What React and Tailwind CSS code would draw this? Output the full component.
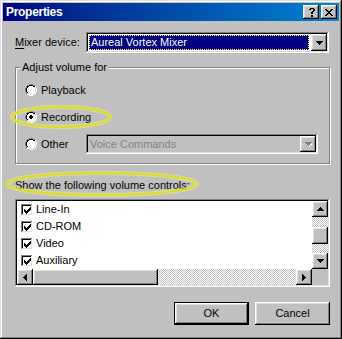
import React from 'react';

// win98 bevels
const raised = 'shadow-[inset_-1px_-1px_#000,inset_1px_1px_#fff,inset_-2px_-2px_#808080,inset_2px_2px_#dfdfdf]';
const sunken = 'shadow-[inset_-1px_-1px_#fff,inset_1px_1px_#808080,inset_-2px_-2px_#dfdfdf,inset_2px_2px_#000]';
const track = 'bg-[image:repeating-conic-gradient(#c0c0c0_0_25%,#ffffff_0_50%)] bg-[length:2px_2px]';

const PAL = { g: '#808080', k: '#000000', w: '#ffffff', l: '#dfdfdf', i: '#ffffff', d: '#000000', '#': '#000000', s: '#808080', h: '#ffffff' };

function Pixels({ rows, colors = PAL, className = '' }) {
  const rects = [];
  rows.forEach((row, y) => {
    [...row].forEach((ch, x) => {
      if (colors[ch]) rects.push(<rect key={x + '-' + y} x={x} y={y} width="1" height="1" fill={colors[ch]} />);
    });
  });
  const w = rows[0].length;
  const h = rows.length;
  return (
    <svg width={w} height={h} viewBox={`0 0 ${w} ${h}`} shapeRendering="crispEdges" className={className}>
      {rects}
    </svg>
  );
}

const RADIO = [
  '....gggg....',
  '..ggkkkkgg..',
  '.gkkiiiikkw.',
  '.gkiiiiiilw.',
  'gkiiiiiiiilw',
  'gkiiiiiiiilw',
  'gkiiiiiiiilw',
  'gkiiiiiiiilw',
  '.gkiiiiiilw.',
  '.glliiiillw.',
  '..wwllllww..',
  '....wwww....',
];

const RADIO_ON = [
  '....gggg....',
  '..ggkkkkgg..',
  '.gkkiiiikkw.',
  '.gkiiiiiilw.',
  'gkiiiddiiilw',
  'gkiiddddiilw',
  'gkiiddddiilw',
  'gkiiiddiiilw',
  '.gkiiiiiilw.',
  '.glliiiillw.',
  '..wwllllww..',
  '....wwww....',
];

const CHECK = ['......#', '.....##', '#...###', '##.###.', '#####..', '.###...', '..#....'];
const CLOSE = ['##....##', '.##..##.', '..####..', '...##...', '..####..', '.##..##.', '##....##'];
const QUESTION = ['.####.', '##..##', '....##', '...##.', '..##..', '..##..', '......', '..##..', '..##..'];
const DOWN = ['#######', '.#####.', '..###..', '...#...'];
const DOWN_OFF = ['sssssss.', '.sssssh.', '..ssshh.', '...sh...', '....h...'];
const UP = ['...#...', '..###..', '.#####.', '#######'];
const LEFT = ['...#', '..##', '.###', '####', '.###', '..##', '...#'];
const RIGHT = ['#...', '##..', '###.', '####', '###.', '##..', '#...'];

function Radio({ label, checked }) {
  return (
    <div className="flex items-center h-[20px]">
      <Pixels rows={checked ? RADIO_ON : RADIO} />
      <span className="ml-[4px]">{label}</span>
    </div>
  );
}

function CheckItem({ label }) {
  return (
    <div className="flex items-center h-[17px] pl-[4px]">
      <div className={`w-[12px] h-[12px] bg-white flex items-center justify-center ${sunken}`}>
        <Pixels rows={CHECK} className="ml-[1px] mt-[1px]" />
      </div>
      <span className="ml-[3px]">{label}</span>
    </div>
  );
}

function ArrowButton({ rows, className = '' }) {
  return (
    <div className={`w-[16px] h-[16px] bg-[#c0c0c0] flex items-center justify-center shrink-0 ${raised} ${className}`}>
      <Pixels rows={rows} />
    </div>
  );
}

export default function App() {
  return (
    <div
      className="relative w-[342px] h-[339px] bg-[#c0c0c0] p-[3px] flex flex-col text-[11px] text-black shadow-[inset_-1px_-1px_#000,inset_1px_1px_#dfdfdf,inset_-2px_-2px_#808080,inset_2px_2px_#fff] overflow-hidden"
      style={{ fontFamily: '"Liberation Sans", Arial, sans-serif' }}
    >
      {/* title bar */}
      <div className="h-[18px] flex items-center justify-between bg-linear-to-r from-[#000080] to-[#1084d0] pl-[3px] pr-[2px]">
        <span className="text-white font-bold text-[12px] tracking-[-0.3px] leading-none">Properties</span>
        <div className="flex gap-[2px]">
          <div className={`w-[16px] h-[14px] bg-[#c0c0c0] flex items-center justify-center ${raised}`}>
            <Pixels rows={QUESTION} className="ml-[1px]" />
          </div>
          <div className={`w-[16px] h-[14px] bg-[#c0c0c0] flex items-center justify-center ${raised}`}>
            <Pixels rows={CLOSE} />
          </div>
        </div>
      </div>

      <div className="pl-[12px] flex flex-col w-[327px]">
        {/* mixer device */}
        <div className="mt-[11px] h-[21px] flex items-center">
          <span className="w-[71px]">
            <span className="underline underline-offset-2">M</span>ixer device:
          </span>
          <div className={`w-[243px] h-[21px] bg-white p-[2px] flex ${sunken}`}>
            <div className="flex-1 m-[1px] mr-[2px] bg-[#000080] border border-dotted border-[#ffff80] text-white pl-[1px] flex items-center leading-none">
              Aureal Vortex Mixer
            </div>
            <ArrowButton rows={DOWN} className="h-[17px]" />
          </div>
        </div>

        {/* group box */}
        <div className="relative mt-[14px] w-[315px] h-[97px] border border-[#808080] shadow-[inset_1px_1px_#fff,1px_1px_#fff]">
          <span className="absolute left-[4px] top-[-8px] px-[2px] bg-[#c0c0c0] leading-[14px]">Adjust volume for</span>
          <div className="pt-[12px] pl-[9px] flex flex-col gap-[7px]">
            <Radio label="Playback" />
            <Radio label="Recording" checked />
            <div className="flex items-center h-[20px]">
              <Pixels rows={RADIO} />
              <span className="ml-[4px] w-[45px]">Other</span>
              <div className={`w-[232px] h-[20px] bg-[#c0c0c0] p-[2px] flex ${sunken}`}>
                <div className="flex-1 text-[#808080] pl-[2px] flex items-center leading-none">Voice Commands</div>
                <div className={`w-[16px] h-[16px] bg-[#c0c0c0] flex items-center justify-center ${raised}`}>
                  <Pixels rows={DOWN_OFF} className="ml-[1px]" />
                </div>
              </div>
            </div>
          </div>
        </div>

        <div className="mt-[14px] h-[14px] leading-[14px]">Show the following volume controls:</div>

        {/* list */}
        <div className={`mt-[7px] w-[315px] h-[88px] bg-white p-[2px] grid grid-cols-[1fr_16px] grid-rows-[1fr_16px] ${sunken}`}>
          <div className="flex flex-col overflow-hidden">
            <CheckItem label="Line-In" />
            <CheckItem label="CD-ROM" />
            <CheckItem label="Video" />
            <CheckItem label="Auxiliary" />
          </div>
          <div className="flex flex-col">
            <ArrowButton rows={UP} />
            <div className={`flex-1 flex items-center ${track}`}>
              <div className={`w-[16px] h-[17px] bg-[#c0c0c0] ${raised}`} />
            </div>
            <ArrowButton rows={DOWN} />
          </div>
          <div className="flex">
            <ArrowButton rows={LEFT} />
            <div className={`w-[125px] h-[16px] bg-[#c0c0c0] ${raised}`} />
            <div className={`flex-1 ${track}`} />
            <ArrowButton rows={RIGHT} />
          </div>
          <div className="bg-[#c0c0c0]" />
        </div>

        {/* buttons */}
        <div className="mt-[15px] w-[315px] flex justify-end gap-[6px]">
          <div className={`w-[75px] h-[23px] bg-[#c0c0c0] border border-black flex items-center justify-center ${raised}`}>OK</div>
          <div className={`w-[75px] h-[23px] bg-[#c0c0c0] flex items-center justify-center ${raised}`}>Cancel</div>
        </div>
      </div>

      {/* yellow annotation circles */}
      <svg className="absolute left-0 top-0 pointer-events-none" width="342" height="339">
        <ellipse cx="61" cy="117" rx="49" ry="10" fill="none" stroke="#f0f070" strokeOpacity="0.5" strokeWidth="4.5" />
        <ellipse cx="61" cy="117" rx="49" ry="10" fill="none" stroke="#dcdc30" strokeWidth="2" />
        <ellipse cx="102" cy="184" rx="95" ry="11" fill="none" stroke="#f0f070" strokeOpacity="0.5" strokeWidth="4.5" />
        <ellipse cx="102" cy="184" rx="95" ry="11" fill="none" stroke="#dcdc30" strokeWidth="2" />
      </svg>
    </div>
  );
}
